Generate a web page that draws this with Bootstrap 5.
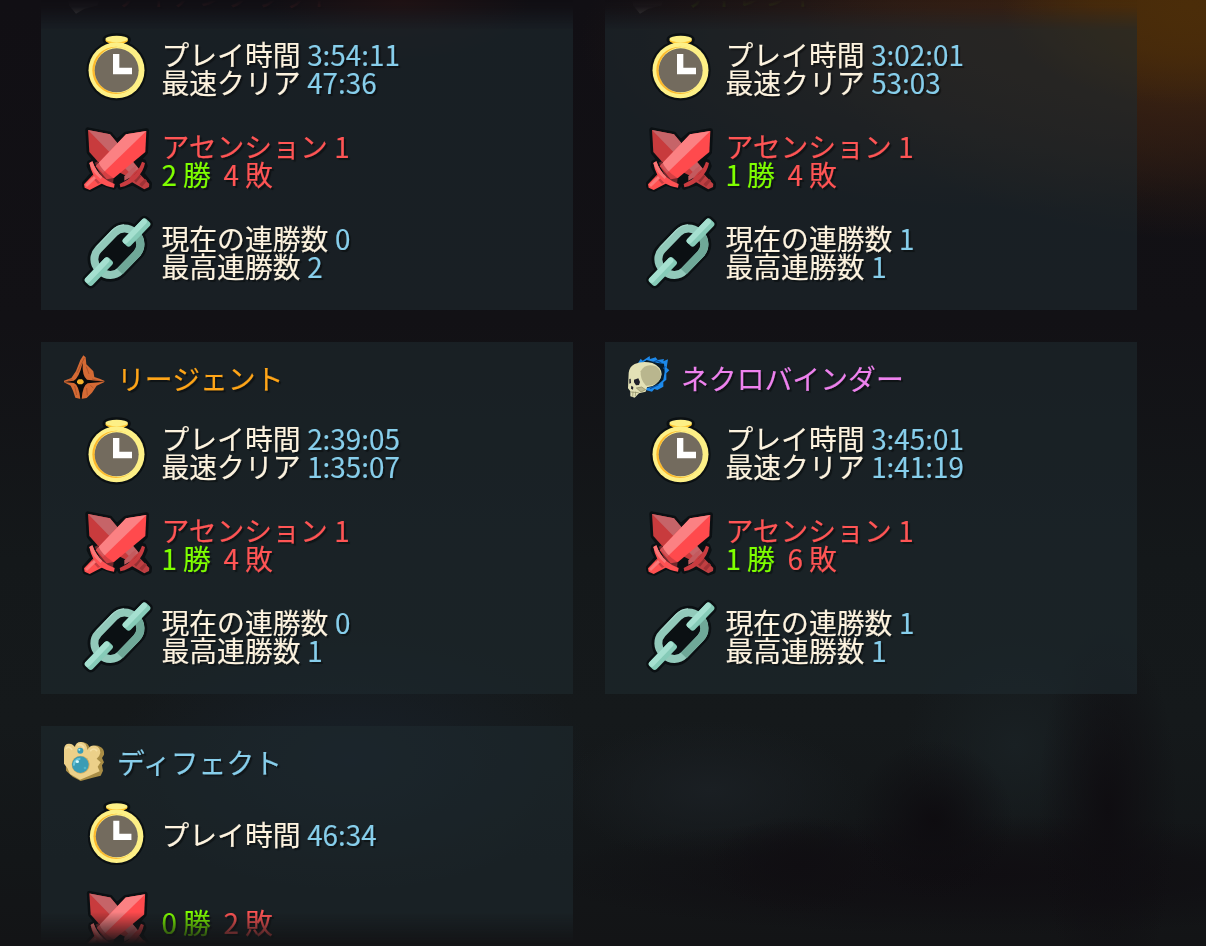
<!DOCTYPE html>
<html lang="ja">
<head>
<meta charset="utf-8">
<meta name="viewport" content="width=device-width, initial-scale=1">
<title>キャラクター統計</title>
<link href="https://cdn.jsdelivr.net/npm/bootstrap@5.3.0/dist/css/bootstrap.min.css" rel="stylesheet">
<style>
html,body{height:100%;overflow:hidden}
body{
  font-family:"Noto Sans CJK JP",sans-serif;font-size:27.85px;line-height:28px;color:#fdf3df;
  background:
    radial-gradient(ellipse 190px 100px at 1190px 5px,#4b2d09 0%,#4b2d09aa 50%,transparent 100%),
    radial-gradient(ellipse 400px 230px at 1206px 10px,#482a0c 0%,#351f12cc 50%,transparent 100%),
    radial-gradient(ellipse 420px 170px at 1000px 40px,#341f16 0%,transparent 100%),
    radial-gradient(ellipse 130px 60px at 400px 0,#1f1214 0%,transparent 100%),
    radial-gradient(ellipse 80px 80px at 934px 820px,#0e0c10 0%,#0e0c1088 45%,transparent 100%),
    radial-gradient(ellipse 70px 190px at 1108px 810px,#0f0d11 0%,#0f0d1188 45%,transparent 100%),
    radial-gradient(ellipse 90px 50px at 800px 865px,#100e12 0%,transparent 100%),
    radial-gradient(ellipse 440px 60px at 980px 875px,#100e12 0%,#100e12aa 50%,transparent 100%),
    radial-gradient(ellipse 150px 70px at 710px 790px,#1a1f23 0%,transparent 100%),
    radial-gradient(ellipse 110px 110px at 1015px 745px,#192023 0%,transparent 100%),
    radial-gradient(ellipse 240px 130px at 350px 760px,#182028 0%,transparent 100%),
    linear-gradient(#110f14 0,#121115 320px,#14181a 560px,#15191b 720px,#131618 860px,#131416 100%);
}
.stats-view{
  height:946px;padding:0 69px 0 41px;
  -webkit-mask-image:linear-gradient(#0000 0,#0001 7px,#000 30px,#000 912px,#0000 944px);
  mask-image:linear-gradient(#0000 0,#0001 7px,#000 30px,#000 912px,#0000 944px);
}
.stats-grid{display:grid;grid-template-columns:532px 532px;gap:32px;margin-top:-42px}
.char-card{height:352px;background:rgba(30,41,46,.6);text-shadow:2px 2px 1px rgba(0,0,0,.4);-webkit-text-stroke:.15px currentColor}
.char-head{height:65px;padding:13px 0 0 22px}
.char-head svg{width:43px;height:45px;flex:none}
.char-name{margin:9px 0 0 11px;font-size:inherit;line-height:28px}
.stat{height:92px;padding-left:41px}
.stat svg{width:74px;height:90px;flex:none}
.stat p{margin:-3px 0 0 5.4px;white-space:pre}
.stat.low{height:88px}
.stat.low svg{height:86px}
.stat .c-blue{margin-left:.3px}
.c-blue{color:#87ceeb}.c-red{color:#ff5555}.c-green{color:#7fff00}.c-orange{color:#ffa518}.c-pink{color:#ee82ee}
</style>
</head>
<body>
<svg width="0" height="0" class="position-absolute" aria-hidden="true">
  <symbol id="clock" viewBox="18 0 222 270">
    <g fill="#0b1013" stroke="#0b1013" stroke-width="15"><circle cx="121.500" cy="139" r="83"/><ellipse cx="122" cy="47" rx="35" ry="12"/></g>
    <ellipse cx="122" cy="49" rx="34" ry="11" fill="#fdc22c"/><path d="M98 52h48l-4 12h-40z" fill="#fdc22c"/>
    <ellipse cx="122" cy="45" rx="34" ry="9.500" fill="#fdf086"/>
    <circle cx="121.500" cy="139" r="84" fill="#fdf086"/>
    <circle cx="120" cy="139" r="71" fill="#fdb92c"/>
    <circle cx="125" cy="138" r="69" fill="#fdf086"/>
    <circle cx="122" cy="139" r="66" fill="#736b5e"/>
    <path d="M111 90h19v41h38v20h-57z" fill="#fff"/>
  </symbol>
  <symbol id="swords" viewBox="18 0 222 270">
    <path d="M36 42 102 55 122 79 150 55 211 45 208 108 181 139 203 138 207 150 197 173 220 203 219 214 204 219 170 200 133 213 124 192 113 213 78 201 42 219 28 215 25 204 52 173 40 150 41 141 50 137 65 140 40 108z" fill="#0b1013" stroke="#0b1013" stroke-width="16" stroke-linejoin="round"/>
    <path d="M36 42 102 55 190 160 165 187 66 137 40 108z" fill="#c83b3d"/>
    <path d="M36 42 102 55 188 158 165 175z" fill="#c66468"/>
    <path d="m186 169 34 35-1 9-14 7-43-25z" fill="#bf3f42"/>
    <path d="m171 190 17-17 8 8-16 19z" fill="#953033"/><path d="m190 205 17-17 6 6-15 18z" fill="#a13236"/>
    <path d="M198 137 207 141Q203 166 181 188 159 209 133 214L131 204Q155 194 175 175 190 160 198 137z" fill="#c93c40"/>
    <path d="M145 181 169 157 180 149 178 166 161 185 145 194z" fill="#c35a5e"/>
    <path d="M211 45 150 55 59 151 92 190 114 186 208 108z" fill="#ff4a4d"/>
    <path d="M211 45 150 55 61 148 81 171z" fill="#fb8183"/>
    <path d="M56 140 66 136Q76 164 113 187L111 203 80 191z" fill="#b8383d" opacity=".6"/>
    <path d="M57 170 24 205 26 215 41 222 91 196z" fill="#ff5050"/>
    <path d="m47 183 19 21 10-6-20-23z" fill="#c93e42"/>
    <path d="m27 207 27-28 7 7-28 27z" fill="#fb7777"/>
    <path d="M40 141 49 136Q59 164 79 183 97 198 116 204L114 215Q91 214 71 199 46 177 40 141z" fill="#ff5254"/>
    <path d="M40 141 49 136Q59 164 79 183L74 189Q48 168 40 141z" fill="#fb7777"/>
  </symbol>
  <symbol id="chain" viewBox="18 0 222 270">
    <g transform="rotate(-46 125 132)">
      <g fill="#0b1013" stroke="#0b1013" stroke-width="15" stroke-linejoin="round">
        <rect x="36" y="73" width="178" height="116" rx="52"/>
        <rect x="157" y="117" width="99" height="30" rx="9"/><rect x="-7" y="117" width="101" height="30" rx="9"/>
      </g>
      <g fill="none" stroke-width="24">
        <rect x="48" y="85" width="154" height="92" rx="42" stroke="#92c9ba"/>
        <path d="M202 125v9a43 43 0 0 1-43 43H87" stroke="#6fa898"/>
        <path d="M93 75h66q24 0 38 14" stroke="#a8d9cc" stroke-width="3"/>
      </g>
      <rect x="157" y="117" width="99" height="30" rx="9" fill="#86cbb8"/><rect x="-7" y="117" width="101" height="30" rx="9" fill="#86cbb8"/>
      <rect x="157" y="117" width="97" height="17" rx="8" fill="#a5e0d0"/><rect x="-6" y="117" width="98" height="17" rx="8" fill="#a5e0d0"/>
    </g>
  </symbol>
  <symbol id="star" viewBox="21 27 129 135">
    <path d="M82 28 89 34 91 55 112 76 115 93 133 99 146 105 144 109 122 119 108 140 92 156 74 159 58 155 51 134 44 119 24 109 24 104 46 96 60 75 73 42z" fill="#d46a34"/>
    <path d="M85 36 73 60 64 80M91 62 99 84M36 103 50 101M108 99 132 105M103 118 112 126M56 120 62 147M92 126 94 148" fill="none" stroke="#9c4722" stroke-width="2"/>
    <path d="M80 50Q78 90 93 101L146 107 95 112Q80 118 77 159L73 159Q69 118 54 111L24 108 53 104Q69 96 80 50z" fill="#090b0c"/>
    <path d="m63 105 5-5h10l5 5v5l-5 5H68l-5-5z" fill="#f5b32c"/>
  </symbol>
  <symbol id="skull" viewBox="21 27 129 135">
    <path d="M54 52 62 38 68 44 89 30 90 39 107 34 113 42 132 39 130 46 144 40 140 65 148 73 139 82 139 101 130 109 130 122 112 132 103 129 96 137 74 131z" fill="#1d89ea"/>
    <path d="M65 52 80 42 113 51 132 53 134 77 130 101 110 119 81 126z" fill="#071b2b"/>
    <path d="M100 48 110 44 124 51M130 68 136 61M90 128 115 116" fill="none" stroke="#0750a1" stroke-width="4"/>
    <path d="M26 80Q29 61 44 54 68 43 97 51 124 62 125 85 122 108 98 120L81 124 77 137 57 142 44 155 31 151 31 136 24 127z" fill="#e3e1b6"/>
    <path d="M62 76Q75 50 108 61 126 74 122 95 112 120 78 119 60 101 62 76z" fill="#b9b68e"/>
    <path d="m42 101 13-4 5 11-3 9-9 1-6-9zM28 99l4-1 1 13-5 2zM34 119l6 4-1 8-6-3z" fill="#20202a"/>
    <path d="M49 126 65 123 77 131 63 138zM33 138l23 2M39 137l-1 15M47 137l-1 13" fill="#b9b68e" stroke="#88865f" stroke-width="2"/>
  </symbol>
  <symbol id="core" viewBox="21 27 129 135">
    <path d="M28 50Q42 36 56 50 62 34 82 37 98 40 102 56 116 40 132 50 146 56 144 74L138 84 144 97 138 106 141 122 134 137 110 143 74 153 50 140 30 122z" fill="#a98d45"/>
    <path d="M24 58Q25 40 40 41 51 42 57 52 60 35 76 36 92 38 94 60 103 44 118 47 133 51 133 68 132 77 122 86L134 97 125 110 131 124 104 136 72 149 42 132 34 114 24 101z" fill="#ecd089"/>
    <path d="M31 55Q38 46 47 58M67 45Q77 41 84 54M104 62Q113 52 122 62" fill="none" stroke="#f6e0a4" stroke-width="5" stroke-linecap="round"/>
    <circle cx="74" cy="104" r="27" fill="#d3ad60"/><circle cx="73" cy="104" r="25" fill="#3a9cb5"/>
    <path d="M54 107a19 19 0 0 1 19-21" stroke="#69c4d8" stroke-width="6" fill="none"/>
    <ellipse cx="64" cy="95" rx="5" ry="4" fill="#d8fbff"/><circle cx="87" cy="114" r="4" fill="#50b7cb"/>
    <circle cx="73" cy="62" r="9" fill="#3a9cb5"/><circle cx="70" cy="59" r="3" fill="#b1edf4"/>
  </symbol>
  <symbol id="helm" viewBox="21 27 129 135">
    <path d="M30 40 60 60 85 35 105 60 140 40 125 130 85 140 60 155 39 130z" fill="#555759"/>
  </symbol>
</svg>

<main class="stats-view overflow-hidden">
  <div class="stats-grid">
    <section class="char-card">
      <div class="char-head d-flex"><svg><use href="#helm"/></svg><h2 class="char-name c-red fw-normal">アイアンクラッド</h2></div>
      <div class="stat d-flex align-items-center"><svg><use href="#clock"/></svg><p>プレイ時間 <span class="c-blue">3:54:11</span><br>最速クリア <span class="c-blue">47:36</span></p></div>
      <div class="stat d-flex align-items-center"><svg><use href="#swords"/></svg><p><span class="c-red">アセンション 1</span><br><span class="c-green">2 勝</span>  <span class="c-red">4 敗</span></p></div>
      <div class="stat d-flex align-items-center"><svg><use href="#chain"/></svg><p>現在の連勝数 <span class="c-blue">0</span><br>最高連勝数 <span class="c-blue">2</span></p></div>
    </section>
    <section class="char-card">
      <div class="char-head d-flex"><svg><use href="#helm"/></svg><h2 class="char-name c-green fw-normal">サイレント</h2></div>
      <div class="stat d-flex align-items-center"><svg><use href="#clock"/></svg><p>プレイ時間 <span class="c-blue">3:02:01</span><br>最速クリア <span class="c-blue">53:03</span></p></div>
      <div class="stat d-flex align-items-center"><svg><use href="#swords"/></svg><p><span class="c-red">アセンション 1</span><br><span class="c-green">1 勝</span>  <span class="c-red">4 敗</span></p></div>
      <div class="stat d-flex align-items-center"><svg><use href="#chain"/></svg><p>現在の連勝数 <span class="c-blue">1</span><br>最高連勝数 <span class="c-blue">1</span></p></div>
    </section>
    <section class="char-card">
      <div class="char-head d-flex"><svg><use href="#star"/></svg><h2 class="char-name c-orange fw-normal">リージェント</h2></div>
      <div class="stat d-flex align-items-center"><svg><use href="#clock"/></svg><p>プレイ時間 <span class="c-blue">2:39:05</span><br>最速クリア <span class="c-blue">1:35:07</span></p></div>
      <div class="stat d-flex align-items-center"><svg><use href="#swords"/></svg><p><span class="c-red">アセンション 1</span><br><span class="c-green">1 勝</span>  <span class="c-red">4 敗</span></p></div>
      <div class="stat d-flex align-items-center"><svg><use href="#chain"/></svg><p>現在の連勝数 <span class="c-blue">0</span><br>最高連勝数 <span class="c-blue">1</span></p></div>
    </section>
    <section class="char-card">
      <div class="char-head d-flex"><svg><use href="#skull"/></svg><h2 class="char-name c-pink fw-normal">ネクロバインダー</h2></div>
      <div class="stat d-flex align-items-center"><svg><use href="#clock"/></svg><p>プレイ時間 <span class="c-blue">3:45:01</span><br>最速クリア <span class="c-blue">1:41:19</span></p></div>
      <div class="stat d-flex align-items-center"><svg><use href="#swords"/></svg><p><span class="c-red">アセンション 1</span><br><span class="c-green">1 勝</span>  <span class="c-red">6 敗</span></p></div>
      <div class="stat d-flex align-items-center"><svg><use href="#chain"/></svg><p>現在の連勝数 <span class="c-blue">1</span><br>最高連勝数 <span class="c-blue">1</span></p></div>
    </section>
    <section class="char-card">
      <div class="char-head d-flex"><svg><use href="#core"/></svg><h2 class="char-name c-blue fw-normal">ディフェクト</h2></div>
      <div class="stat low d-flex align-items-center"><svg><use href="#clock"/></svg><p>プレイ時間 <span class="c-blue">46:34</span></p></div>
      <div class="stat low d-flex align-items-center"><svg><use href="#swords"/></svg><p><span class="c-green">0 勝</span>  <span class="c-red">2 敗</span></p></div>
    </section>
  </div>
</main>
<script src="https://cdn.jsdelivr.net/npm/bootstrap@5.3.0/dist/js/bootstrap.bundle.min.js"></script>
</body>
</html>
